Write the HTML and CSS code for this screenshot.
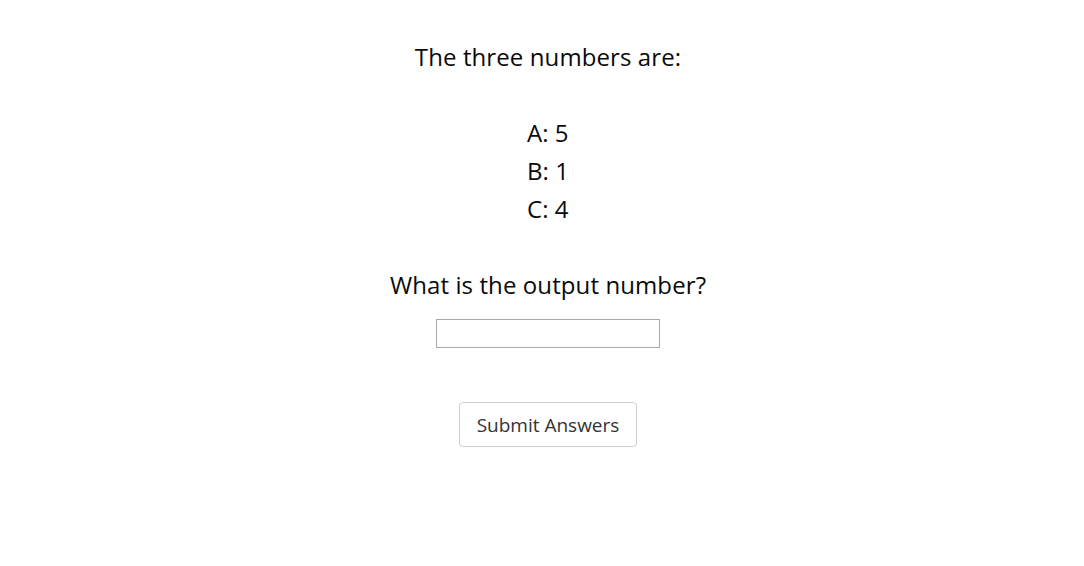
FILE: index.html
```html
<!DOCTYPE html>
<html>
<head>
<meta charset="utf-8">
<link rel="stylesheet" href="styles.css">
</head>
<body>
<main class="quiz">
  <p class="title">The three numbers are:</p>
  <div class="numbers">
    <div class="num">A: 5</div>
    <div class="num">B: 1</div>
    <div class="num">C: 4</div>
  </div>
  <p class="question">What is the output number?</p>
  <input class="answer" type="text">
  <button class="submit" type="button">Submit Answers</button>
</main>
</body>
</html>
```
FILE: styles.css
```css
html, body {
  margin: 0;
  padding: 0;
  background: #fff;
}
body {
  font-family: "Open Sans", "Noto Sans", sans-serif;
  color: #0a0a0a;
}
.quiz {
  display: flex;
  flex-direction: column;
  align-items: center;
  padding-left: 12px;
  padding-top: 40px;
}
.title {
  margin: 0;
  font-size: 24px;
  line-height: 34px;
  letter-spacing: 0.1px;
}
.numbers {
  margin-top: 40px;
  display: flex;
  flex-direction: column;
}
.num {
  font-size: 24px;
  line-height: 38px;
}
.question {
  margin: 40px 0 0;
  font-size: 24px;
  line-height: 34px;
  letter-spacing: 0.1px;
}
.answer {
  margin-top: 17px;
  width: 224px;
  height: 29px;
  box-sizing: border-box;
  border: 1px solid #a9a9a9;
  padding: 0 4px;
  font-family: inherit;
  font-size: 16px;
}
.submit {
  margin-top: 54px;
  width: 178px;
  height: 45px;
  box-sizing: border-box;
  background: #fff;
  border: 1px solid #cfcfcf;
  border-radius: 4px;
  font-family: "Open Sans", sans-serif;
  font-size: 19px;
  color: #333;
}
```
